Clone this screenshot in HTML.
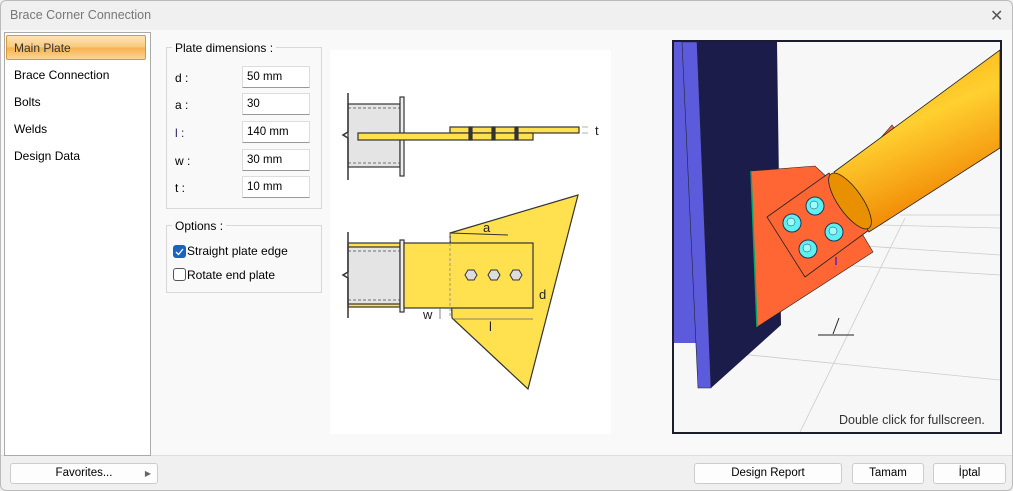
<!DOCTYPE html>
<html><head><style>
*{margin:0;padding:0;box-sizing:border-box}
body{width:1013px;height:491px;background:#f0f0f0;font-family:"Liberation Sans",sans-serif;font-size:12px;color:#000;position:relative;overflow:hidden}
.a{position:absolute}
.win{left:0;top:0;width:1013px;height:491px;border:1px solid #bbb;border-radius:6px;background:#f0f0f0}
.title{left:10px;top:8px;font-size:12.5px;color:#777}
.list{left:4px;top:32px;width:147px;height:424px;background:#fff;border:1px solid #aaa}
.item{position:absolute;left:10px;font-size:12px}
.sel{left:6px;top:35px;width:140px;height:25px;border:1px solid #d49a3a;border-radius:2px;background:linear-gradient(#fde4b8,#f9c87a 50%,#f6b04e 51%,#fbd597);}
.grp{border:1px solid #d8d8d8}
.lbl{font-size:12px}
.inp{position:absolute;left:242px;width:68px;height:22px;background:#fff;border:1px solid #ddd;border-bottom:1px solid #999;padding:4px 4px;font-size:11.5px}
.btn{position:absolute;top:463px;height:21px;background:#fdfdfd;border:1px solid #ccc;border-radius:3px;font-size:11.5px;text-align:center;line-height:19px}
.cb{position:absolute;width:13px;height:13px;border-radius:3px}
</style></head><body>
<div class="a win"></div>
<div class="a" style="left:1px;top:30px;width:1011px;height:426px;background:#f9f9f9;border-bottom:1px solid #ddd"></div>
<div class="a title">Brace Corner Connection</div>
<div class="a" style="left:990px;top:6px;font-size:16px;color:#555">✕</div>
<div class="a list"></div>
<div class="a sel"></div>
<div class="item" style="left:14px;top:41px;color:#333">Main Plate</div>
<div class="item" style="left:14px;top:68px">Brace Connection</div>
<div class="item" style="left:14px;top:95px">Bolts</div>
<div class="item" style="left:14px;top:122px">Welds</div>
<div class="item" style="left:14px;top:149px">Design Data</div>

<div class="a grp" style="left:166px;top:47px;width:156px;height:162px"></div>
<div class="a lbl" style="left:172px;top:41px;background:#f9f9f9;padding:0 3px">Plate dimensions :</div>
<div class="a lbl" style="left:175px;top:71px">d :</div>
<div class="a lbl" style="left:175px;top:98px">a :</div>
<div class="a lbl" style="left:175px;top:126px;color:#226">l :</div>
<div class="a lbl" style="left:175px;top:154px">w :</div>
<div class="a lbl" style="left:175px;top:181px">t :</div>
<div class="inp" style="top:66px">50 mm</div>
<div class="inp" style="top:93px">30</div>
<div class="inp" style="top:121px">140 mm</div>
<div class="inp" style="top:149px">30 mm</div>
<div class="inp" style="top:176px">10 mm</div>

<div class="a grp" style="left:166px;top:225px;width:156px;height:68px"></div>
<div class="a lbl" style="left:172px;top:219px;background:#f9f9f9;padding:0 3px">Options :</div>
<div class="cb" style="left:173px;top:245px;background:#1a64c0"><svg width="13" height="13"><path d="M3 7l2.5 2.5L10 4" stroke="#fff" stroke-width="1.3" fill="none"/></svg></div>
<div class="a lbl" style="left:187px;top:244px">Straight plate edge</div>
<div class="cb" style="left:173px;top:268px;border:1px solid #555;background:#fff"></div>
<div class="a lbl" style="left:187px;top:268px">Rotate end plate</div>

<svg class="a" style="left:330px;top:50px" width="281" height="384">
<rect width="281" height="384" fill="#fff"/>
<g transform="translate(-330,-50)" stroke="#333" stroke-width="1.2">
<rect x="348" y="104" width="52" height="63" fill="#e4e4e4"/>
<line x1="348" y1="108" x2="400" y2="108" stroke="#888" stroke-dasharray="3,2"/>
<line x1="348" y1="163" x2="400" y2="163" stroke="#888" stroke-dasharray="3,2"/>
<path d="M348 93V132l-5 3 5 3V180" fill="none" stroke-width="1.5"/>
<rect x="400" y="97" width="4" height="79" fill="#eee"/>
<rect x="450" y="127" width="129" height="6" fill="#ffe14f"/>
<rect x="358" y="133" width="175" height="7" fill="#ffe14f"/>
<rect x="469" y="127" width="3" height="13" fill="#333"/>
<rect x="492" y="127" width="3" height="13" fill="#333"/>
<rect x="515" y="127" width="3" height="13" fill="#333"/>
<path d="M582 127h6M582 133h6" stroke="#999" stroke-width="0.8"/>
<path d="M450 233L578 195 528 389 452 318Z" fill="#ffe14f"/>
<rect x="348" y="243" width="52" height="64" fill="#ffe14f"/>
<rect x="348" y="247" width="52" height="57" fill="#e4e4e4"/>
<line x1="348" y1="251" x2="400" y2="251" stroke="#888" stroke-dasharray="3,2"/>
<line x1="348" y1="300" x2="400" y2="300" stroke="#888" stroke-dasharray="3,2"/>
<path d="M348 232V272l-5 3 5 3V318" fill="none" stroke-width="1.5"/>
<rect x="400" y="240" width="4" height="72" fill="#eee"/>
<rect x="404" y="243" width="129" height="65" fill="#ffe14f"/>
<line x1="450" y1="233" x2="450" y2="318" stroke="#888" stroke-dasharray="3,2" stroke-width="0.8"/>
<line x1="450" y1="233" x2="508" y2="235" stroke-width="1"/>
<g fill="#ddd" stroke-width="1"><polygon points="465,275 468,270 474,270 477,275 474,280 468,280"/><polygon points="488,275 491,270 497,270 500,275 497,280 491,280"/><polygon points="510,275 513,270 519,270 522,275 519,280 513,280"/></g>
<path d="M452 319H533M440 307v12" stroke="#666" stroke-width="0.8"/>
</g>
<g font-size="13" fill="#222"><text x="265" y="85">t</text><text x="153" y="182">a</text><text x="209" y="249">d</text><text x="93" y="269">w</text><text x="159" y="281">l</text></g>
</svg>

<div class="a" style="left:672px;top:40px;width:330px;height:394px;border:2px solid #1c1c30;background:#f7f7f7;overflow:hidden">
<svg width="326" height="390" style="position:absolute;left:0;top:0">
<g transform="translate(-674,-42)">
<g stroke="#ccc" stroke-width="0.8" fill="none">
<path d="M800 432L905 218M700 350L1000 380M840 265L1000 275M850 245L1000 255M880 225L1000 228M900 215L1000 215"/>
</g>
<path d="M839 318l-6 16M818 335h36" stroke="#222" stroke-width="1"/>
<path d="M674 42H682L697 343H674Z" fill="#5b5bdc"/>
<path d="M682 42H697L711 388H698Z" fill="#5b5bdc" stroke="#223" stroke-width="0.6"/>
<path d="M697 42H777L781 325 711 388Z" fill="#1c1c4a"/>
<path d="M892 125L937 188 905 206 870 150Z" fill="#ff6633" stroke="#222" stroke-width="0.6"/>
<path d="M751 171L815 166 830 180 873 252 757 327Z" fill="#ff6633" stroke="#222" stroke-width="0.6"/>
<path d="M751 171L757 327" stroke="#0a6" stroke-width="1.5"/>
<path d="M767 217L829 173 869 230 805 277Z" fill="#ff6633" stroke="#222" stroke-width="0.8"/>
<defs><linearGradient id="g" x1="0" y1="0" x2="0.4" y2="1"><stop offset="0" stop-color="#f5a000"/><stop offset="0.5" stop-color="#ffd030"/><stop offset="1" stop-color="#f08000"/></linearGradient></defs>
<path d="M834 172L1000 50V148L869 232Z" fill="url(#g)" stroke="#222" stroke-width="0.8"/>
<ellipse cx="850" cy="201" rx="12" ry="33" transform="rotate(-35 850 201)" fill="#e89000" stroke="#222" stroke-width="0.8"/>
<g fill="#5ef0f0" stroke="#235" stroke-width="1"><circle cx="815" cy="206" r="9"/><circle cx="792" cy="223" r="9"/><circle cx="834" cy="232" r="9"/><circle cx="808" cy="249" r="9"/></g>
<g fill="#9ff" stroke="#235" stroke-width="0.5"><circle cx="814" cy="205" r="4"/><circle cx="791" cy="222" r="4"/><circle cx="833" cy="231" r="4"/><circle cx="807" cy="248" r="4"/></g>
<path d="M836 257v8" stroke="#00f" stroke-width="1"/>
</g>
</svg>
<div class="a" style="left:165px;top:371px;font-size:12.5px;color:#333">Double click for fullscreen.</div>
</div>

<div class="btn" style="left:10px;width:148px">Favorites...<span style="position:absolute;right:6px;font-size:8px;color:#666">▶</span></div>
<div class="btn" style="left:694px;width:148px">Design Report</div>
<div class="btn" style="left:852px;width:72px">Tamam</div>
<div class="btn" style="left:933px;width:73px">İptal</div>
</body></html>
